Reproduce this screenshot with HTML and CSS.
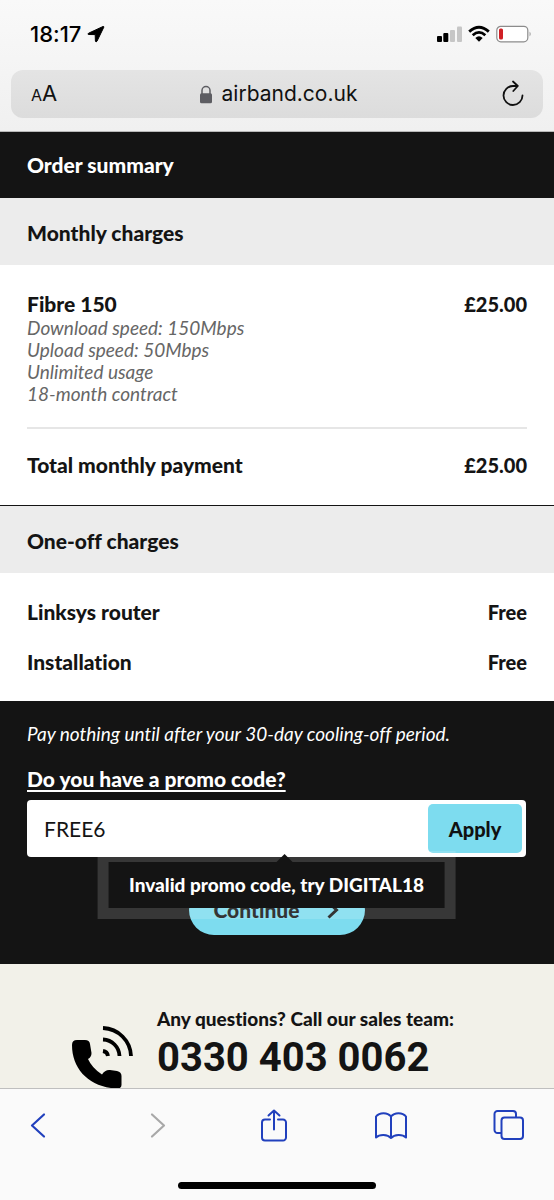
FILE: index.html
```html
<!DOCTYPE html>
<html lang="en">
<head>
<meta charset="utf-8">
<meta name="viewport" content="width=device-width, initial-scale=1">
<title>Order summary</title>
<link rel="stylesheet" href="styles.css">
</head>
<body>
<div class="screen">
  <header class="browser-top">
    <div class="status">
      <div class="status-time">
        <span>18:17</span>
        <svg width="18" height="18" viewBox="0 0 18 18" aria-hidden="true"><path d="M16 1.500 1.600 8.200Q0 9.300 1.800 9.500L8.200 9.600 8.400 16Q9 17.800 10 16.200L16.800 2.200Q17 1.200 16 1.500Z" stroke="#000"/></svg>
      </div>
      <div class="status-icons">
        <svg width="26" height="18" viewBox="0 0 26 18" aria-hidden="true"><rect x="1" y="11" width="5" height="6" rx="1"/><rect x="7.300" y="8" width="5" height="9" rx="1"/><g fill="#c6c6c6"><rect x="14" y="5" width="5" height="12" rx="1"/><rect x="21" y="1.500" width="5" height="15.500" rx="1"/></g></svg>
        <svg width="22" height="18" viewBox="0 0 22 18" aria-hidden="true"><g fill="none" stroke="#000" stroke-width="2.800"><path d="M1.200 6.600Q11-2.200 20.800 6.600"/><path d="M4.700 10.200Q11 4.600 17.300 10.200"/></g><path d="M7.300 13Q11 9.600 14.700 13L11 16.700Z"/></svg>
        <svg width="36" height="18" viewBox="0 0 36 18" aria-hidden="true"><rect x=".8" y="1.300" width="31" height="15.500" rx="4" fill="#fff" stroke="#8c8c8c" stroke-width="1.200"/><rect x="3" y="3.500" width="4" height="11" rx="1.500" fill="#d02025"/><path d="M33.600 6.500Q35.600 9 33.600 11.500Z" fill="#8c8c8c"/></svg>
      </div>
    </div>
    <div class="address">
      <button class="text-size" type="button" aria-label="Text size"><span class="small-a">A</span>A</button>
      <div class="site">
        <svg width="14" height="19" viewBox="0 0 14 19" aria-hidden="true"><path d="M3 9V5.500a4 4 0 0 1 8 0V9" fill="none" stroke="#5d5d62" stroke-width="1.500"/><rect x="1" y="8.300" width="12" height="10" rx="1.500" fill="#5d5d62"/></svg>
        <span>airband.co.uk</span>
      </div>
      <button class="reload" type="button" aria-label="Reload">
        <svg width="24" height="28" viewBox="0 0 24 28" fill="none" stroke="#111" stroke-width="1.800" stroke-linecap="round" stroke-linejoin="round" aria-hidden="true"><path d="M21.500 15.500A9.500 9.500 0 1 1 12 6H16.500M12 1.500 16.800 6 12.300 11"/></svg>
      </button>
    </div>
  </header>

  <main class="page">
    <h1 class="bar bar-dark">Order summary</h1>
    <section>
      <h2 class="bar">Monthly charges</h2>
      <div class="charges">
        <div class="plan">
          <div class="row"><h3>Fibre 150</h3><span class="price">£25.00</span></div>
          <ul class="details">
            <li>Download speed: 150Mbps</li>
            <li>Upload speed: 50Mbps</li>
            <li>Unlimited usage</li>
            <li>18-month contract</li>
          </ul>
        </div>
        <div class="row total"><span>Total monthly payment</span><span class="price">£25.00</span></div>
      </div>
    </section>
    <section class="one-off">
      <h2 class="bar">One-off charges</h2>
      <div class="extras">
        <div class="row"><span>Linksys router</span><span class="price">Free</span></div>
        <div class="row"><span>Installation</span><span class="price">Free</span></div>
      </div>
    </section>
    <form class="promo">
      <p class="note">Pay nothing until after your 30-day cooling-off period.</p>
      <label class="promo-label" for="code">Do you have a promo code?</label>
      <div class="field">
        <input id="code" class="code" type="text" value="FREE6">
        <button class="apply" type="button">Apply</button>
        <div class="tip" role="alert">Invalid promo code, try DIGITAL18</div>
      </div>
      <button class="continue" type="button">Continue
        <svg width="12" height="18" viewBox="0 0 12 18" fill="none" stroke="#111" stroke-width="3" aria-hidden="true"><path d="M1.500 1.500 9.500 9 1.500 16.500"/></svg>
      </button>
    </form>
    <aside class="sales">
      <svg width="62" height="66" viewBox="0 0 62 66" aria-hidden="true"><path d="M0 20Q0 15 5 15H13Q17.500 15 18 19L19.500 28Q19.500 32 16 34Q20 43 30 49.500Q33 44.500 38 45L45 46Q49.500 47 49.500 51V60Q49.500 64 44 63.500C17 62 0 44 0 20Z"/><g fill="none" stroke="#000" stroke-width="3.800"><path d="M31 3A29 29 0 0 1 59 31"/><path d="M31 14.500A17 17 0 0 1 47.500 31"/><path d="M31 26A6 6 0 0 1 36 31"/></g></svg>
      <div>
        <p class="question">Any questions? Call our sales team:</p>
        <a class="number" href="tel:03304030062">0330 403 0062</a>
      </div>
    </aside>
  </main>

  <footer class="browser-bottom">
    <nav class="tools" aria-label="Browser">
      <button type="button" aria-label="Back"><svg width="32" height="34" viewBox="0 0 32 34"><path d="M22 6.500 10 17.500 22 28.500" stroke-width="2.200"/></svg></button>
      <button type="button" aria-label="Forward" disabled><svg width="32" height="34" viewBox="0 0 32 34"><path d="M12 6.500 24 17.500 12 28.500" stroke-width="2.200"/></svg></button>
      <button type="button" aria-label="Share"><svg width="32" height="34" viewBox="0 0 32 34"><path d="M12 11.500H7A3 3 0 0 0 4 14.500V29.500A3 3 0 0 0 7 32.500H25A3 3 0 0 0 28 29.500V14.500A3 3 0 0 0 25 11.500H20M16 21.500V2.500M10.500 7.500 16 2.500 21.500 7.500"/></svg></button>
      <button type="button" aria-label="Bookmarks"><svg width="32" height="34" viewBox="0 0 32 34"><path d="M16 8.500C12.500 4 4.500 4 1 8.500V29.500C4.500 26 12.500 26 16 30C19.500 26 27.500 26 31 29.500V8.500C27.500 4 19.500 4 16 8.500V30"/></svg></button>
      <button type="button" aria-label="Tabs"><svg width="32" height="34" viewBox="0 0 32 34"><path d="M8 25H4.500A3 3 0 0 1 1.500 22V6A3 3 0 0 1 4.500 3H20A3 3 0 0 1 23 6V9"/><rect x="8.500" y="9.500" width="21.500" height="21.500" rx="3"/></svg></button>
    </nav>
    <div class="home"></div>
  </footer>
</div>
</body>
</html>
```
FILE: styles.css
```css
* { box-sizing: border-box; }
body { margin: 0; }
h1, h2, h3, p, ul { margin: 0; padding: 0; font-size: inherit; font-weight: inherit; }
svg { display: block; flex: none; }
button { border: 0; padding: 0; background: none; font: inherit; color: inherit; }

.screen {
  display: flex;
  flex-direction: column;
  height: 100vh;
  overflow: hidden;
  font: 900 21px/24px Lato, "Liberation Sans", sans-serif;
  font-variant-ligatures: none;
  color: #141414;
}

.browser-top {
  flex: none;
  padding: 21px 11px 13px;
  background: linear-gradient(#f9f9f9, #f0f0f0);
  border-bottom: 1px solid #b8b8b8;
  font-family: Inter, sans-serif;
  font-weight: 400;
}
.status { display: flex; justify-content: space-between; align-items: center; height: 25px; margin: 0 11px 24px 19px; }
.status-time { display: flex; align-items: center; gap: 6px; font-size: 22px; font-weight: 500; color: #000; }
.status-icons { display: flex; align-items: center; gap: 6px; }
.address {
  display: grid;
  grid-template-columns: 1fr auto 1fr;
  align-items: center;
  height: 48px;
  padding: 0 18px 0 20px;
  border-radius: 12px;
  background: linear-gradient(#e4e4e4, #dcdcdc);
  font-size: 21px;
  color: #111;
}
.text-size { justify-self: start; font-size: 22px; }
.small-a { font-size: 16px; }
.site { display: flex; align-items: center; gap: 9px; }
.reload { justify-self: end; }

.page { flex: 1; min-height: 0; overflow: hidden; background: #fff; }
.bar { padding: 22px 27px 20px; line-height: 25px; background: #ececec; }
.bar-dark { padding: 20px 27px 21px; background: #141414; color: #fff; }
.row { display: flex; justify-content: space-between; }
.price { font-size: 20px; }
.charges { padding: 27px 27px 28px; }
.plan { padding-bottom: 22px; border-bottom: 2px solid #e6e6e6; }
.details { margin-top: 1px; list-style: none; font-size: 19px; line-height: 22px; font-weight: 400; font-style: italic; color: #666; }
.total { padding-top: 24px; }
.one-off { border-top: 1px solid #141414; }
.extras { display: grid; gap: 26px; padding: 27px; }

.promo { padding: 21px 28px 29px 27px; background: #141414; color: #fff; }
.note { margin-bottom: 21px; font-size: 19px; font-weight: 400; font-style: italic; }
.promo-label { display: block; margin-bottom: 9px; text-decoration: underline; text-decoration-thickness: 2px; text-underline-offset: 3px; }
.field { position: relative; display: flex; padding: 4px; border-radius: 4px; background: #fff; }
.code { flex: 1; min-width: 0; padding: 0 13px; border: 0; outline: 0; background: none; font: 400 21px/26px Lato, sans-serif; color: #141414; }
.apply { width: 94px; height: 49px; border-radius: 5px; background: #7ddcef; color: #111; font-size: 20px; }
.tip {
  position: absolute;
  z-index: 1;
  top: 62px;
  left: 50%;
  transform: translateX(-50%);
  padding: 11px 21px;
  background: #141414;
  box-shadow: 0 0 0 11px rgba(255, 255, 255, .15);
  font-size: 19px;
  white-space: nowrap;
}
.tip::before {
  content: "";
  position: absolute;
  bottom: 100%;
  left: 50%;
  border: 8px solid transparent;
  border-top: 0;
  border-bottom-color: #141414;
}
.continue {
  display: flex;
  align-items: center;
  justify-content: center;
  gap: 28px;
  width: 176px;
  height: 50px;
  margin: 28px auto 0;
  border-radius: 25px;
  background: #7ddcef;
  color: #111;
}

.sales { display: flex; gap: 23px; padding: 43px 72px; background: #f2f1e9; }
.sales svg { margin-top: 18px; }
.question { font-size: 19px; white-space: nowrap; }
.number { display: block; font: 700 40px/54px Roboto, sans-serif; color: #141414; text-decoration: none; white-space: nowrap; }

.browser-bottom { flex: none; height: 112px; padding: 19px 29px 11px 22px; border-top: 1px solid #bfbfbf; background: #fafafa; display: flex; flex-direction: column; justify-content: space-between; }
.tools { display: flex; justify-content: space-between; }
.tools svg { fill: none; stroke: #2140bd; stroke-width: 2; stroke-linejoin: round; stroke-linecap: round; }
.tools button:disabled svg { stroke: #a8a8a8; }
.home { align-self: center; width: 198px; height: 7px; border-radius: 4px; background: #000; }
.tools + .home { margin-left: 7px; }
```
